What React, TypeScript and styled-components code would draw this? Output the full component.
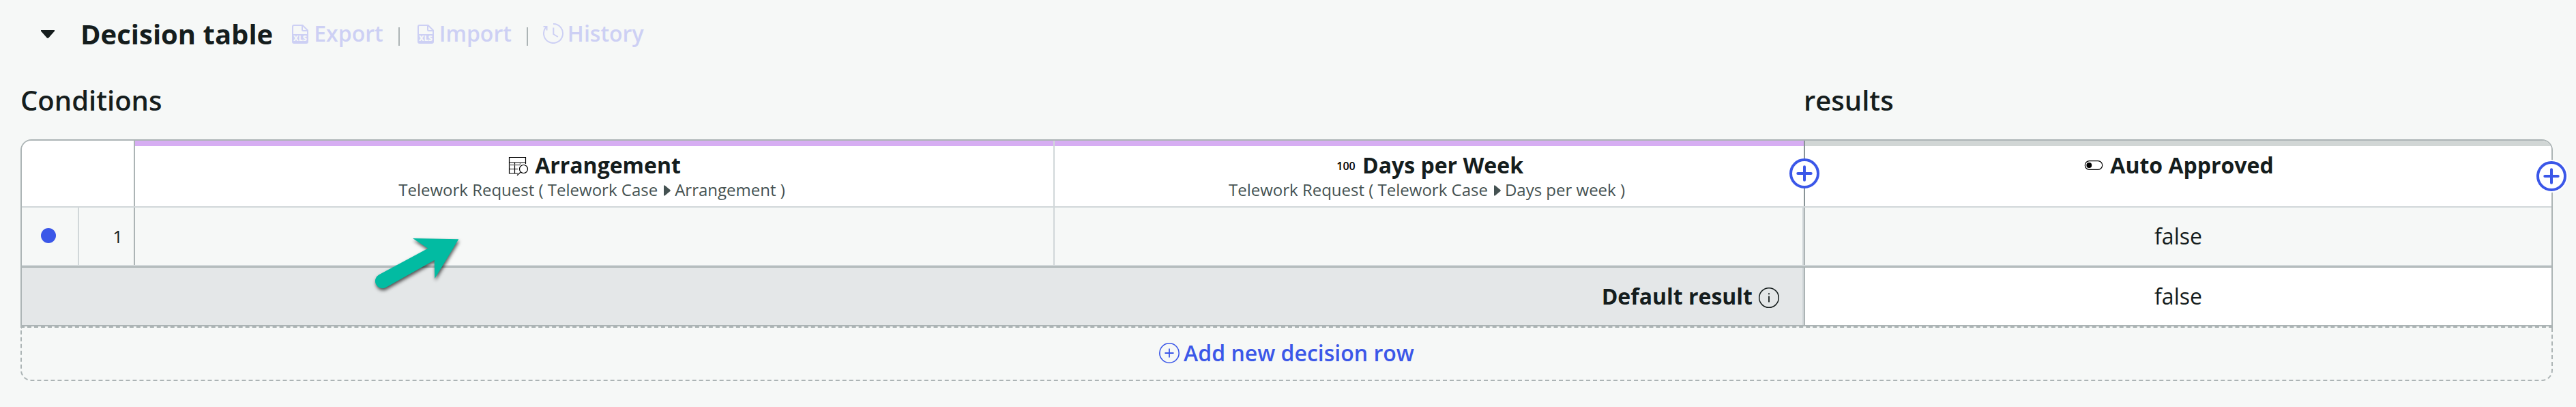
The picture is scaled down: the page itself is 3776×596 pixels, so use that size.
import React from 'react';
import styled, { createGlobalStyle } from 'styled-components';

const color = {
  page: '#f6f8f7',
  ink: '#151d1d',
  muted: '#455252',
  accent: '#3b57e8',
  disabled: '#cdd0f4',
  border: '#acb4b5',
  line: '#d1d7d9',
  condition: '#d6adf2',
  result: '#d1d6d5',
  footer: '#e4e7e8',
};

const GlobalStyle = createGlobalStyle`
  *, *::before, *::after { box-sizing: border-box; }
  body {
    margin: 0;
    background: ${color.page};
    color: ${color.ink};
    font-family: "Open Sans", "Noto Sans", sans-serif;
    font-size: 32px;
    line-height: 43px;
  }
  svg { display: block; flex: none; }
`;

const Page = styled.main`
  width: 3776px;
  height: 596px;
  padding: 22px 34px 0 30px;
  overflow: hidden;
`;

const Toolbar = styled.header`
  display: flex;
  align-items: center;
  height: 55px;
  padding-left: 30px;

  > svg { margin-top: 1px; }
`;

const Title = styled.h1`
  margin: 0 24px 0 38px;
  font-size: 40px;
  font-weight: 700;
  line-height: 55px;
  white-space: nowrap;
`;

const Actions = styled.div`
  display: flex;
  align-items: center;
  padding-bottom: 2px;
`;

const Action = styled.button`
  display: flex;
  align-items: center;
  gap: 4px;
  padding: 0;
  border: 0;
  background: none;
  color: ${color.disabled};
  font: inherit;
  font-weight: 600;

  svg { margin-bottom: 1px; }
`;

const Separator = styled.span`
  width: 2px;
  height: 27px;
  margin: 9px 22px 0;
  background: ${color.border};
`;

const Headings = styled.div`
  display: grid;
  grid-template-columns: 2614px 1fr;
  margin-top: 42px;
`;

const Heading = styled.h2`
  margin: 0;
  font-size: 40px;
  font-weight: 600;
  line-height: 55px;
`;

const Table = styled.section`
  position: relative;
  margin-top: 30px;
  width: 3712px;
  border: 2px solid ${color.border};
  border-radius: 16px 16px 0 0;
`;

const HeaderRow = styled.div`
  display: grid;
  grid-template-columns: 166px 1348px 1100px 1094px;
  height: 98px;
  border-bottom: 2px solid ${color.line};
  border-radius: 14px 14px 0 0;
  background: #fff;
  overflow: hidden;
`;

const HeaderCell = styled.div<{ $band?: string; $edge?: string }>`
  display: flex;
  flex-direction: column;
  align-items: center;
  border-right: ${(p) => (p.$edge ? `2px solid ${p.$edge}` : '0')};

  &::before {
    content: '';
    align-self: stretch;
    height: 8px;
    margin-bottom: 6px;
    background: ${(p) => p.$band ?? 'transparent'};
  }
`;

const ColumnName = styled.div`
  display: flex;
  align-items: center;
  gap: 8px;
  font-weight: 700;
  white-space: nowrap;

  svg { margin-top: 1px; }
`;

const ColumnPath = styled.div`
  display: flex;
  align-items: center;
  padding-right: 7px;
  color: ${color.muted};
  font-size: 24px;
  line-height: 29px;
  white-space: nowrap;

  svg { margin: 3px 6px 0 9px; }
`;

const NumberBadge = styled.span`
  width: 32px;
  margin-top: 3px;
  color: #000;
  font-size: 16px;
  font-weight: 600;
  line-height: 32px;
  text-align: center;
`;

const DecisionRow = styled.div`
  display: grid;
  grid-template-columns: 84px 82px 1348px 1098px 1096px;
  height: 86px;
  border-bottom: 2px solid ${color.line};
`;

const Cell = styled.div<{ $edge?: string; $start?: boolean }>`
  display: flex;
  align-items: center;
  justify-content: center;
  padding-bottom: 1px;
  border-right: ${(p) => (p.$edge ? `2px solid ${p.$edge}` : '0')};
  border-left: ${(p) => (p.$start ? `2px solid ${color.border}` : '0')};
`;

const StatusCell = styled(Cell)`
  padding: 0 4px 2px 0;
`;

const StatusDot = styled.span`
  width: 22px;
  height: 22px;
  border-radius: 50%;
  background: ${color.accent};
`;

const IndexCell = styled(Cell)`
  justify-content: flex-end;
  padding: 0 16px 0 0;
  font-size: 26px;
  line-height: 36px;
`;

const DefaultRow = styled.div`
  display: grid;
  grid-template-columns: 2612px 1096px;
  height: 86px;
  border-top: 2px solid ${color.border};
`;

const DefaultLabel = styled(Cell)`
  justify-content: flex-end;
  gap: 8px;
  padding-right: 33px;
  background: ${color.footer};
  font-weight: 700;

  svg { margin-top: 5px; }
`;

const DefaultValue = styled(Cell)`
  background: #fff;
`;

const AddColumn = styled.button<{ $x: number; $y: number; $ring?: boolean }>`
  position: absolute;
  left: ${(p) => p.$x}px;
  top: ${(p) => p.$y}px;
  width: 44px;
  height: 44px;
  padding: 0;
  border: 0;
  border-radius: 50%;
  background: #fff;
  color: ${color.accent};
  box-shadow: ${(p) => (p.$ring ? '0 0 0 2px #fff' : 'none')};
`;

const AddRow = styled.button`
  display: flex;
  align-items: center;
  justify-content: center;
  gap: 6px;
  width: 3712px;
  height: 80px;
  padding: 0 0 3px;
  border: 2px dashed ${color.border};
  border-radius: 0 0 16px 16px;
  background: none;
  color: ${color.accent};
  font: inherit;
  font-weight: 600;

  svg { margin-top: 1px; }
`;

const Pointer = styled.svg`
  position: absolute;
  left: 508px;
  top: 134px;
  filter: drop-shadow(1px 3px 2.5px rgba(0, 0, 0, 0.65));
`;

const Caret = () => (
  <svg width="20" height="12" viewBox="0 0 20 12">
    <path d="M0 0h20v1.6L11.4 11.3a2 2 0 0 1-2.8 0L0 1.6z" fill={color.ink} />
  </svg>
);

const XlsIcon = () => (
  <svg width="32" height="32" viewBox="0 0 32 32">
    <path d="M5 18V7a2 2 0 0 1 2-2H19.500L27 12.500V18" fill="none" stroke="currentColor" strokeWidth="2" />
    <path d="M19 5v6.500a1.500 1.500 0 0 0 1.500 1.500H27" fill="none" stroke="currentColor" strokeWidth="2" />
    <path d="M4 18h24v11a3 3 0 0 1-3 3H7a3 3 0 0 1-3-3z" fill="currentColor" />
    <text x="16" y="28.200" textAnchor="middle" textLength="20" lengthAdjust="spacingAndGlyphs" fontSize="11" fontWeight="800" fill={color.page}>
      XLS
    </text>
  </svg>
);

const HistoryIcon = () => (
  <svg width="32" height="32" viewBox="0 0 32 32" fill="none" stroke="currentColor" strokeWidth="2">
    <path d="M15 3a14 14 0 1 1-9.900 4.100" />
    <path d="M0.500 7h5v5.500M15.300 8.500v9.500l6.500 4" />
  </svg>
);

const TableSearchIcon = () => (
  <svg width="32" height="32" viewBox="0 0 32 32" fill="none" stroke="#000">
    <path d="M15 28H2.500V4.500H26.500V14M2 12H27" strokeWidth="1.200" />
    <path d="M10.500 12V28M2.500 21.500H15" strokeWidth="1.200" />
    <path d="M2.500 15.500H18M18.500 12V15" strokeWidth="1.400" stroke="#777" />
    <circle cx="23.500" cy="21.500" r="6" strokeWidth="1.200" />
    <path d="M19 26.200L14 30.800" strokeWidth="1.200" />
  </svg>
);

const ToggleIcon = () => (
  <svg width="32" height="32" viewBox="0 0 32 32" stroke="#000">
    <rect x="3.300" y="9.600" width="25.400" height="12.800" rx="6.400" fill="none" strokeWidth="1.200" />
    <circle cx="9.300" cy="16" r="3.900" stroke="none" />
  </svg>
);

const PathArrow = () => (
  <svg width="10" height="16" viewBox="0 0 10 16">
    <path d="M0 0.500h1.500L9.300 7a1.400 1.400 0 0 1 0 2L1.500 15.500H0z" fill={color.muted} />
  </svg>
);

const InfoIcon = () => (
  <svg width="32" height="32" viewBox="0 0 32 32" fill="none" stroke={color.ink}>
    <circle cx="16" cy="16" r="14.300" strokeWidth="1.500" />
    <path d="M16 13.500v9M16 9.300v2" strokeWidth="1.800" />
  </svg>
);

const PlusCircleThin = () => (
  <svg width="30" height="30" viewBox="0 0 30 30" fill="none" stroke="currentColor">
    <circle cx="15" cy="15" r="14.200" strokeWidth="1.600" />
    <path d="M8.500 15h13M15 8.500v13" strokeWidth="1.800" />
  </svg>
);

const PlusCircleBold = () => (
  <svg width="44" height="44" viewBox="0 0 44 44" fill="none" stroke="currentColor" strokeWidth="4">
    <circle cx="22" cy="22" r="20" />
    <path d="M12.300 22h19.400M22 12.300v19.400" strokeLinecap="round" />
  </svg>
);

export default function App() {
  return (
    <Page>
      <GlobalStyle />
      <Toolbar>
        <Caret />
        <Title>Decision table</Title>
        <Actions>
          <Action><XlsIcon />Export</Action>
          <Separator />
          <Action><XlsIcon />Import</Action>
          <Separator />
          <Action><HistoryIcon />History</Action>
        </Actions>
      </Toolbar>

      <Headings>
        <Heading>Conditions</Heading>
        <Heading>results</Heading>
      </Headings>

      <Table>
        <HeaderRow>
          <HeaderCell $edge={color.border} />
          <HeaderCell $band={color.condition} $edge={color.line}>
            <ColumnName><TableSearchIcon />Arrangement</ColumnName>
            <ColumnPath>Telework Request ( Telework Case<PathArrow />Arrangement )</ColumnPath>
          </HeaderCell>
          <HeaderCell $band={color.condition} $edge="#899497">
            <ColumnName><NumberBadge>100</NumberBadge>Days per Week</ColumnName>
            <ColumnPath>Telework Request ( Telework Case<PathArrow />Days per week )</ColumnPath>
          </HeaderCell>
          <HeaderCell $band={color.result}>
            <ColumnName><ToggleIcon />Auto Approved</ColumnName>
          </HeaderCell>
        </HeaderRow>
        <DecisionRow>
          <StatusCell $edge={color.line}><StatusDot /></StatusCell>
          <IndexCell $edge={color.border}>1</IndexCell>
          <Cell $edge={color.line} />
          <Cell $edge={color.line} />
          <Cell $start>false</Cell>
        </DecisionRow>
        <DefaultRow>
          <DefaultLabel $edge={color.line}>Default result<InfoIcon /></DefaultLabel>
          <DefaultValue $start>false</DefaultValue>
        </DefaultRow>
        <AddColumn $x={2591} $y={26}><PlusCircleBold /></AddColumn>
        <AddColumn $x={3686} $y={30} $ring><PlusCircleBold /></AddColumn>
        <Pointer width="140" height="90" viewBox="540 340 140 90">
          <path
            d="M672.300 350.300L605 349L627.300 363.700L555.500 402.300A10.500 10.500 0 0 0 565.500 420.900L636.700 381L637.300 408Z"
            fill="#02bba2"
          />
        </Pointer>
      </Table>
      <AddRow><PlusCircleThin />Add new decision row</AddRow>
    </Page>
  );
}
